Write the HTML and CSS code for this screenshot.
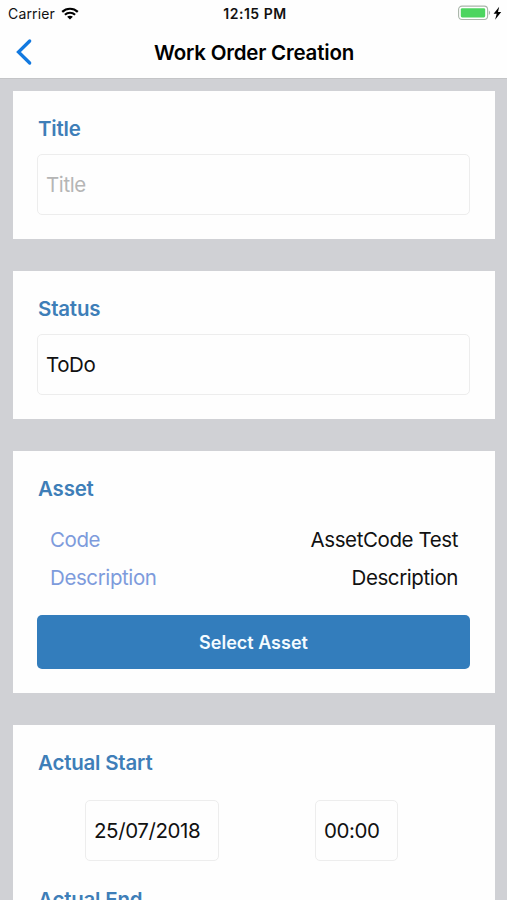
FILE: index.html
```
<!DOCTYPE html>
<html lang="en">
<head>
    <meta charset="UTF-8">
    <meta name="viewport" content="width=device-width, initial-scale=1.0">
    <title>Work Order Creation</title>
    <link rel="stylesheet" href="styles.css">
</head>
<body>
    <header>
        <div class="status-bar">
            <div class="carrier">
                <span>Carrier</span>
                <svg width="18" height="13" viewBox="0 0 18 13">
                    <path d="M1.2 4.9C5.6.7 12.4.7 16.8 4.9" fill="none" stroke="#000" stroke-width="2.2"/>
                    <path d="M3.9 7.8c2.9-2.7 7.3-2.7 10.2 0" fill="none" stroke="#000" stroke-width="2.1"/>
                    <path d="M9 12.6 6.1 9.8c1.6-1.5 4.2-1.5 5.8 0z"/>
                </svg>
            </div>
            <span class="clock">12:15 PM</span>
            <div class="battery">
                <svg width="44" height="16" viewBox="0 0 44 16">
                    <rect x=".6" y="1.1" width="29" height="13.4" rx="3.4" fill="#fff" stroke="#a9b5a9" stroke-width="1.1"/>
                    <rect x="2.8" y="3.2" width="24.4" height="9.2" rx="1.4" fill="#4cd55f"/>
                    <path d="M30.9 5.6c1.6.8 1.6 3.6 0 4.4z" fill="#a9b5a9"/>
                    <path d="M41.2 1.8 35.6 8.8h3.1l-1.6 5.9 6.1-7.7H40z"/>
                </svg>
            </div>
        </div>
        <nav>
            <a class="back" href="#" aria-label="Back">
                <svg width="18" height="28" viewBox="0 0 18 28">
                    <path d="M14.7 3 3.5 14l11.2 11" fill="none" stroke="#1279e0" stroke-width="3.3" stroke-linecap="round" stroke-linejoin="miter"/>
                </svg>
            </a>
            <h1>Work Order Creation</h1>
        </nav>
    </header>

    <main>
        <section class="card">
            <h2>Title</h2>
            <div class="field placeholder">Title</div>
        </section>

        <section class="card">
            <h2>Status</h2>
            <div class="field">ToDo</div>
        </section>

        <section class="card">
            <h2>Asset</h2>
            <div class="details">
                <div class="row">
                    <span class="key">Code</span>
                    <span>AssetCode Test</span>
                </div>
                <div class="row">
                    <span class="key">Description</span>
                    <span>Description</span>
                </div>
            </div>
            <button type="button">Select Asset</button>
        </section>

        <section class="card">
            <h2>Actual Start</h2>
            <div class="date-time">
                <div class="field date">25/07/2018</div>
                <div class="field time">00:00</div>
            </div>
            <h2>Actual End</h2>
        </section>
    </main>
</body>
</html>
```
FILE: styles.css
```
* {
    box-sizing: border-box;
}

body {
    margin: 0;
    height: 100vh;
    overflow: hidden;
    display: flex;
    flex-direction: column;
    font-family: Inter, "Liberation Sans", sans-serif;
    font-size: 20.5px;
    letter-spacing: -0.4px;
    color: #111;
    background-color: #d0d1d5;
}

header {
    flex: none;
    height: 79px;
    background-color: #fefefe;
    border-bottom: 1px solid #c4c5c7;
}

.status-bar {
    display: grid;
    grid-template-columns: 1fr auto 1fr;
    align-items: center;
    height: 26px;
    padding: 0 5px 0 8px;
    font-size: 14px;
    letter-spacing: 0.15px;
}

.carrier {
    display: flex;
    align-items: center;
    gap: 6px;
}

.clock {
    font-weight: 600;
    letter-spacing: 0.5px;
}

.battery {
    display: flex;
    justify-content: flex-end;
}

nav {
    display: grid;
    grid-template-columns: 60px 1fr 60px;
    align-items: center;
    height: 52px;
}

.back {
    display: flex;
    padding-left: 15px;
}

h1 {
    margin: 1px 0 0 1px;
    font-size: 20.5px;
    font-weight: 600;
    line-height: 24px;
    letter-spacing: -0.2px;
    text-align: center;
    color: #000;
}

main {
    flex: none;
    display: flex;
    flex-direction: column;
    gap: 32px;
    padding: 12px 12px 32px 13px;
}

.card {
    padding: 26px 25px 24px 24px;
    background-color: #fefefe;
}

h2 {
    margin: 0 0 13px 1px;
    font-size: 20.5px;
    font-weight: 600;
    line-height: 24px;
    letter-spacing: -0.2px;
    color: #3e7eb8;
}

.field {
    height: 61px;
    padding: 0 8px;
    border: 1px solid #ededed;
    border-radius: 5px;
    line-height: 59px;
}

.placeholder {
    color: #b5b5b5;
}

.details {
    padding: 7px 12px 0 13px;
}

.row {
    display: flex;
    justify-content: space-between;
    height: 38px;
    line-height: 38px;
}

.key {
    color: #7d9bdc;
}

button {
    display: block;
    width: 100%;
    height: 54px;
    margin-top: 18px;
    padding: 0;
    border: none;
    border-radius: 5px;
    background-color: #337dbc;
    color: #f4fbff;
    font-family: inherit;
    font-size: 18px;
    font-weight: 600;
}

.date-time {
    display: flex;
    justify-content: space-around;
    padding: 12px 24px 27px 0;
}

.date {
    width: 134px;
}

.time {
    width: 83px;
}
```
